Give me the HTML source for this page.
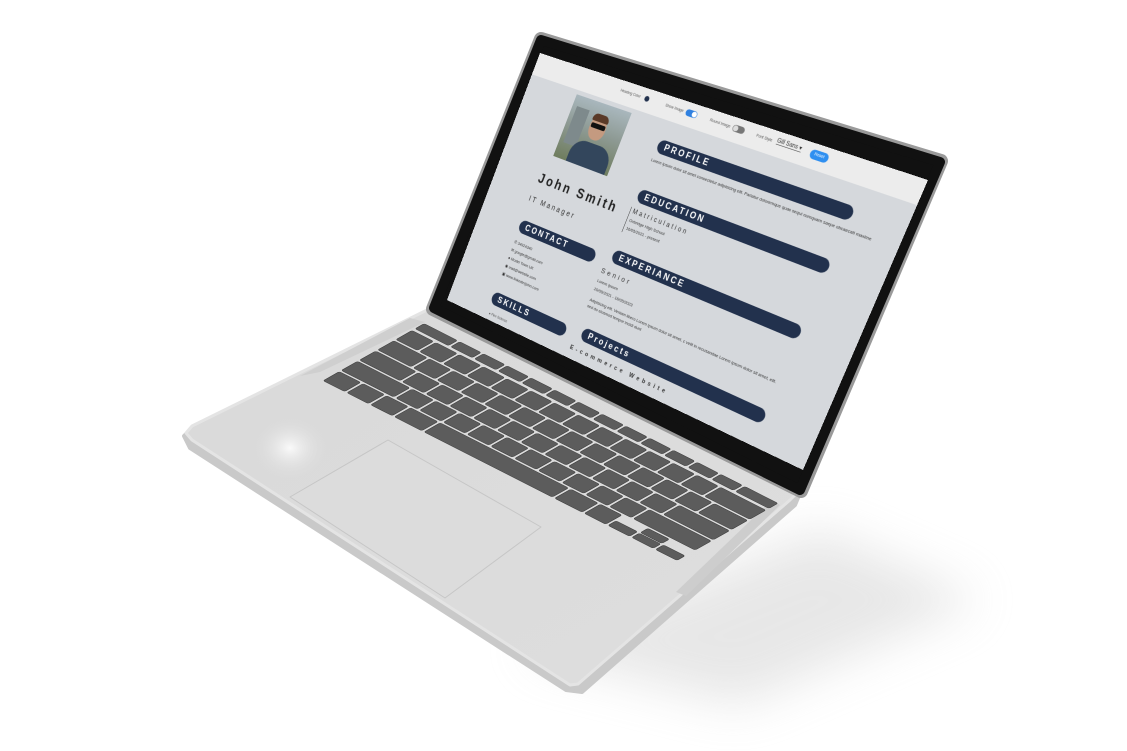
<!DOCTYPE html>
<html><head><meta charset="utf-8">
<style>
html,body{margin:0;padding:0;background:#fff;width:1127px;height:751px;overflow:hidden;position:relative;font-family:"Liberation Sans",sans-serif}
#scr{position:absolute;left:0;top:0;width:800px;height:500px;overflow:hidden;background:#d5d8dc;transform-origin:0 0;
transform:matrix3d(0.29166,0.12125,0,-0.00020833,-0.15796,0.51282,0,0.00006274,0,0,1,0,540,53,0,1)}
.tb{position:absolute;left:0;top:0;width:800px;height:42px;background:#ececec}
.ab{position:absolute;white-space:nowrap}
.pill{position:absolute;height:25px;border-radius:13px;background:#22314d;color:#fff;font-weight:bold;font-size:16px;letter-spacing:4px;line-height:25px;padding-left:14px;box-sizing:border-box}
.sm{font-size:8px;color:#333}
.xs{font-size:7px;color:#555}
</style></head><body>
<svg width="1127" height="751" style="position:absolute;left:0;top:0">
<defs>
<filter id="bl" x="-50%" y="-50%" width="200%" height="200%"><feGaussianBlur stdDeviation="24"/></filter>
<radialGradient id="hl" cx="0.5" cy="0.5" r="0.5"><stop offset="0" stop-color="#fafafa"/><stop offset="1" stop-color="#dadada" stop-opacity="0"/></radialGradient>
<linearGradient id="bs" x1="0" y1="0" x2="1" y2="1"><stop offset="0" stop-color="#d9d9d9"/><stop offset="1" stop-color="#dedede"/></linearGradient>
</defs>
<polygon points="520,650 820,530 980,600 740,705" fill="#c4c4c4" opacity="0.4" filter="url(#bl)"/>
<polygon points="427,312 800,493 795,505 582,692 566,690 190,448 184,436 192,428" fill="#c9c9c9" stroke="#c9c9c9" stroke-width="4" stroke-linejoin="round"/>
<polygon points="427,310 800,490 790,500 578,684 570,685 192,440 186,433 192,426" fill="url(#bs)" stroke="#e4e4e4" stroke-width="3" stroke-linejoin="round"/>
<ellipse cx="290" cy="448" rx="38" ry="32" fill="url(#hl)"/>
<polygon points="410,318 425,322 320,372 300,376" fill="#cfcfcf"/>
<polygon points="772,500 780,505 686,596 676,592" fill="#cdcdcd"/>
<polygon points="290,497 388,440 541,527 445,598" fill="#dcdcdc" stroke="#c6c6c6" stroke-width="1" stroke-linejoin="round"/>
<g transform="matrix(1.187 0.603 -1.01 0.571 423 323)" fill="#5c5c5c" stroke="#3c3c3c" stroke-width="0.5">
<rect x="1" y="0" width="28" height="9" rx="1.5"/>
<g id="f"><rect x="31" y="0" width="18" height="9" rx="1.5"/><rect x="51" y="0" width="18" height="9" rx="1.5"/><rect x="71" y="0" width="18" height="9" rx="1.5"/><rect x="91" y="0" width="18" height="9" rx="1.5"/></g>
<use href="#f" x="80"/><use href="#f" x="160"/>
<rect x="271" y="0" width="28" height="9" rx="1.5"/>
<g id="r1"><rect x="1" y="12" width="18" height="16" rx="1.5"/><rect x="21" y="12" width="18" height="16" rx="1.5"/><rect x="41" y="12" width="18" height="16" rx="1.5"/><rect x="61" y="12" width="18" height="16" rx="1.5"/></g>
<use href="#r1" x="80"/><use href="#r1" x="160"/>
<rect x="241" y="12" width="18" height="16" rx="1.5"/><rect x="261" y="12" width="38" height="16" rx="1.5"/>
<rect x="1" y="30" width="28" height="16" rx="1.5"/>
<use href="#r1" x="30" y="18"/><use href="#r1" x="110" y="18"/><use href="#r1" x="190" y="18"/>
<rect x="271" y="30" width="28" height="16" rx="1.5"/>
<rect x="1" y="48" width="34" height="16" rx="1.5"/>
<use href="#r1" x="36" y="36"/><use href="#r1" x="116" y="36"/>
<rect x="197" y="48" width="18" height="16" rx="1.5"/><rect x="217" y="48" width="18" height="16" rx="1.5"/><rect x="237" y="48" width="18" height="16" rx="1.5"/>
<rect x="257" y="48" width="42" height="16" rx="1.5"/>
<rect x="1" y="66" width="44" height="16" rx="1.5"/>
<use href="#r1" x="46" y="54"/><use href="#r1" x="126" y="54"/>
<rect x="207" y="66" width="18" height="16" rx="1.5"/><rect x="227" y="66" width="18" height="16" rx="1.5"/>
<rect x="247" y="66" width="52" height="16" rx="1.5"/>
<rect x="1" y="84" width="18" height="16" rx="1.5"/><rect x="21" y="84" width="18" height="16" rx="1.5"/><rect x="41" y="84" width="18" height="16" rx="1.5"/><rect x="61" y="84" width="23" height="16" rx="1.5"/>
<rect x="86" y="84" width="108" height="16" rx="1.5"/>
<rect x="196" y="84" width="23" height="16" rx="1.5"/><rect x="221" y="84" width="18" height="16" rx="1.5"/>
<rect x="241" y="92" width="18" height="8" rx="1.5"/><rect x="261" y="84" width="18" height="7.5" rx="1.5"/><rect x="261" y="92.5" width="18" height="7.5" rx="1.5"/><rect x="281" y="92" width="18" height="8" rx="1.5"/>
</g>
<polygon points="432,302 802,482 800,496 430,314" fill="#1a1a1a"/>
<polygon points="541,39 941,161 801,491 433,309" fill="#9a9a9a" stroke="#9a9a9a" stroke-width="14" stroke-linejoin="round"/>
<polygon points="541,40 940,162 800,490 434,308" fill="#111" stroke="#111" stroke-width="10" stroke-linejoin="round"/>
</svg>

<div id="scr">
  <div class="tb"></div>
  <div class="ab xs" style="left:200px;top:15px">Heading Color</div>
  <div class="ab" style="left:254px;top:13px;width:10px;height:10px;border-radius:50%;background:#22314d"></div>
  <div class="ab xs" style="left:300px;top:15px">Show Image</div>
  <div class="ab" style="left:344px;top:12px;width:24px;height:12px;border-radius:6px;background:#2f80e0"></div>
  <div class="ab" style="left:357px;top:13px;width:10px;height:10px;border-radius:50%;background:#fff"></div>
  <div class="ab xs" style="left:395px;top:15px">Round Image</div>
  <div class="ab" style="left:442px;top:12px;width:24px;height:12px;border-radius:6px;background:#777"></div>
  <div class="ab" style="left:443px;top:13px;width:10px;height:10px;border-radius:50%;background:#ddd"></div>
  <div class="ab xs" style="left:490px;top:15px">Font Style</div>
  <div class="ab" style="left:530px;top:10px;font-size:10px;color:#333;border-bottom:1px solid #555;width:48px">Gill Sans &#9662;</div>
  <div class="ab" style="left:595px;top:10px;width:34px;height:16px;border-radius:8px;background:#2f8ff0;color:#fff;font-size:7px;text-align:center;line-height:16px">Reset</div>

  <div class="ab" style="left:113px;top:50px;width:127px;height:120px;overflow:hidden;background:linear-gradient(180deg,#a9b7bd 0%,#8e9a94 45%,#6f7d5e 100%)">
    <div class="ab" style="left:10px;top:20px;width:30px;height:70px;background:#7e8a8c"></div>
    <div class="ab" style="left:52px;top:24px;width:36px;height:44px;border-radius:45%;background:#c49a80"></div>
    <div class="ab" style="left:52px;top:20px;width:36px;height:14px;border-radius:14px 14px 4px 4px;background:#5a3a28"></div>
    <div class="ab" style="left:54px;top:38px;width:32px;height:9px;background:#111;border-radius:3px"></div>
    <div class="ab" style="left:30px;top:74px;width:90px;height:60px;border-radius:30px 30px 0 0;background:#33465c"></div>
  </div>

  <div class="ab" style="left:100px;top:203px;font-size:25px;font-weight:bold;letter-spacing:5px;color:#222">John Smith</div>
  <div class="ab" style="left:96px;top:250px;font-size:14px;letter-spacing:4px;color:#333">IT Manager</div>
  <div class="pill" style="left:98px;top:300px;width:181px">CONTACT</div>
  <div class="ab sm" style="left:100px;top:340px">&#9990; 34924340</div>
  <div class="ab sm" style="left:100px;top:356px">&#9993; google@gmail.com</div>
  <div class="ab sm" style="left:100px;top:372px">&#9679; Model Town UK</div>
  <div class="ab sm" style="left:100px;top:388px">&#9673; mail@website.com</div>
  <div class="ab sm" style="left:100px;top:404px">&#9635; www.linkedin/john.com</div>
  <div class="pill" style="left:98px;top:445px;width:181px">SKILLS</div>
  <div class="ab xs" style="left:104px;top:485px">&#9679; Flex Science</div>

  <div class="pill" style="left:316px;top:76px;width:390px">PROFILE</div>
  <div class="ab sm" style="left:314px;top:110px;width:440px;white-space:normal;line-height:12px">Lorem ipsum dolor sit amet consectetur adipisicing elit. Pariatur doloremque quas sequi numquam saepe obcaecati maxime</div>
  <div class="pill" style="left:316px;top:169px;width:388px">EDUCATION</div>
  <div class="ab" style="left:312px;top:205px;width:1px;height:48px;background:#444"></div>
  <div class="ab" style="left:318px;top:204px;font-size:12px;letter-spacing:4px;color:#333">Matriculation</div>
  <div class="ab sm" style="left:318px;top:224px">Oxbridge High School</div>
  <div class="ab sm" style="left:318px;top:239px">16/05/2021 - present</div>
  <div class="pill" style="left:313px;top:285px;width:390px">EXPERIANCE</div>
  <div class="ab" style="left:302px;top:322px;font-size:13px;letter-spacing:5px;color:#333">Senior</div>
  <div class="ab sm" style="left:302px;top:345px">Lorem Ipsum</div>
  <div class="ab sm" style="left:302px;top:361px">20/05/2021 - 16/05/2023</div>
  <div class="ab sm" style="left:302px;top:381px;line-height:12px">Adipisicing elit. Veniam libero Lorem ipsum dolor sit amet, c velit in recusandae Lorem ipsum dolor sit amet, elit.<br>sed do eiusmod tempor incidi dunt</div>
  <div class="pill" style="left:313px;top:436px;width:390px">Projects</div>
  <div class="ab" style="left:300px;top:474px;font-size:11px;letter-spacing:6px;color:#333;font-weight:bold">E-commerce Website</div>
</div>
</body></html>
